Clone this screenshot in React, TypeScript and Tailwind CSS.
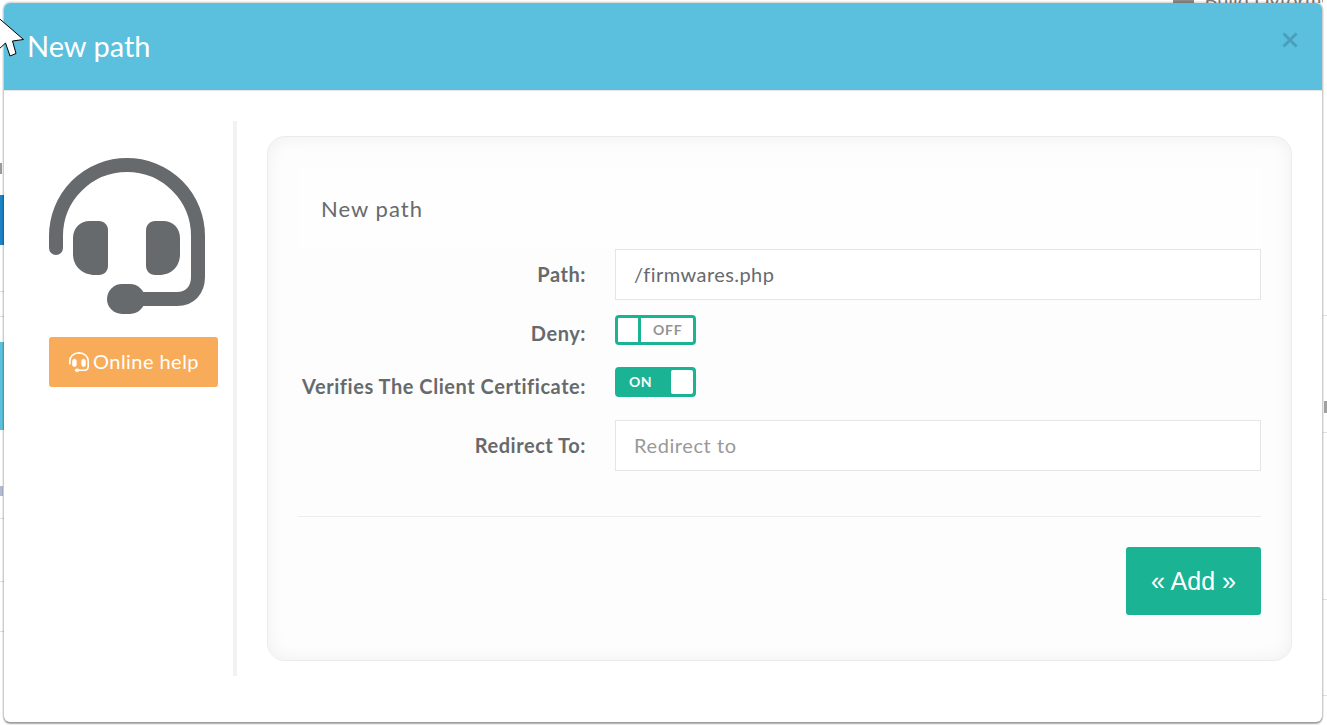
import React from 'react'

function Headset({ className }: { className?: string }) {
  return (
    <svg viewBox="0 0 156 156" className={className} fill="none">
      <path d="M7 90V78A71 71 0 0 1 149 78V119C149 132 141 141 128 141H90" stroke="currentColor" strokeWidth="14" strokeLinecap="round" />
      <path d="M41 63H50C55 63 59 67 59 72V108C59 113 55 117 50 117H46C33 117 24 108 24 96V80C24 70 31 63 41 63Z" fill="currentColor" />
      <path d="M114 63H106C101 63 97 67 97 72V108C97 113 101 117 106 117H110C123 117 131 108 131 96V80C131 70 124 63 114 63Z" fill="currentColor" />
      <rect x="58" y="126" width="38" height="30" rx="15" fill="currentColor" />
    </svg>
  )
}

function Toggle({ on }: { on: boolean }) {
  if (on) {
    return (
      <div className="flex h-[30px] w-[81px] items-center rounded-[4px] border-[3px] border-[#1ab394] bg-[#1ab394]">
        <span className="flex-1 pl-[11px] text-[14px] font-bold leading-none tracking-[0.4px] text-white">ON</span>
        <span className="h-full w-[22px] rounded-[2px] bg-white" />
      </div>
    )
  }
  return (
    <div className="flex h-[30px] w-[81px] items-center rounded-[4px] border-[3px] border-[#1ab394] bg-white">
      <span className="h-full w-[23px] border-r-[3px] border-[#1ab394]" />
      <span className="flex-1 pl-[12px] text-[14px] font-bold leading-none tracking-[0.8px] text-[#939393]">OFF</span>
    </div>
  )
}

function Row({ label, labelClass, className, children }: { label: string; labelClass?: string; className?: string; children: React.ReactNode }) {
  return (
    <div className={`flex items-center ${className ?? ''}`}>
      <label className={`w-[288px] whitespace-nowrap text-right text-[20px] font-bold tracking-[0.55px] text-[#676a6c] ${labelClass ?? ''}`}>{label}</label>
      <div className="ml-[29px] flex-1">{children}</div>
    </div>
  )
}

export default function App() {
  return (
    <div className="relative flex h-[725px] w-[1327px] justify-between overflow-hidden bg-white font-['Lato',sans-serif] text-[#676a6c]">
      {/* slivers of the page behind the modal */}
      <div className="flex w-[4px] flex-col">
        <div className="mt-[163px] h-[11px] w-[2px] bg-[#9a9a9a]" />
        <div className="mt-[21px] h-[50px] bg-[#1c84c6]" />
        <div className="mt-[46px] h-px bg-[#e0e0e0]" />
        <div className="mt-[24px] h-px bg-[#e0e0e0]" />
        <div className="mt-[25px] h-[88px] bg-[#5bc0de]" />
        <div className="mt-[56px] h-[10px] w-[3px] bg-[#b4b9d0]" />
        <div className="mt-[22px] h-px bg-[#e0e0e0]" />
        <div className="mt-[62px] h-px bg-[#e0e0e0]" />
        <div className="mt-[49px] h-px bg-[#e0e0e0]" />
      </div>
      <div className="flex h-[3px] flex-1 justify-end gap-[10px] overflow-hidden">
        <div className="h-full w-[21px] shrink-0 bg-[#8a8a8a]" />
        <span className="-mr-[7px] -mt-[15px] whitespace-nowrap text-[20px] text-[#7a7a7a]">Build Dyforms</span>
      </div>
      <div className="flex w-[4px] flex-col">
        <div className="mt-[315px] h-px bg-[#e0e0e0]" />
        <div className="mt-[85px] h-[12px] w-[3px] self-end bg-[#a0a0a0]" />
        <div className="mt-[19px] h-px bg-[#e0e0e0]" />
        <div className="mt-[166px] h-px bg-[#e0e0e0]" />
        <div className="mt-[95px] h-px bg-[#e0e0e0]" />
      </div>

      <div className="absolute left-[4px] top-[3px] flex h-[719px] w-[1318px] flex-col rounded-[6px] bg-white shadow-[0_0_0_1.5px_rgba(0,0,0,0.13),0_2px_2px_rgba(0,0,0,0.3)]">
        <div className="flex h-[88px] items-center justify-between rounded-t-[6px] border-b border-[#e5e5e5] bg-[#5bc0de] px-[24px]">
          <h4 className="-ml-px mb-[3px] text-[29px] font-normal leading-none text-white">New path</h4>
          <svg viewBox="0 0 16 16" className="mb-[13px] h-[16px] w-[16px] text-[#4aa0bb]" fill="none">
            <path d="M1.5 1.5L14.5 14.5M14.5 1.5L1.5 14.5" stroke="currentColor" strokeWidth="3" />
          </svg>
        </div>

        <div className="flex flex-1 pl-[45px] pt-[30px]">
          <div className="h-[555px] w-[188px] border-r-[4px] border-[#f2f2f2] pt-[37px]">
            <Headset className="h-[156px] w-[156px] text-[#676a6c]" />
            <button className="mt-[23px] flex h-[50px] w-[169px] items-center justify-center rounded-[3px] bg-[#f8ac59] pb-[2px] text-[20px] tracking-[0.45px] text-white">
              <svg viewBox="0 0 24 24" className="mr-[3px] mt-[2px] h-[22px] w-[22px]" fill="none" stroke="currentColor">
                <path d="M2 14V11C2 6 6 2 12 2C18 2 22 6 22 11V17C22 19.5 20.5 21 18 21H11" strokeWidth="1.8" strokeLinecap="round" />
                <rect x="5" y="9" width="4" height="8" rx="2" fill="currentColor" strokeWidth="0.8" />
                <rect x="15" y="9" width="4" height="8" rx="2" fill="currentColor" strokeWidth="0.8" />
                <rect x="8" y="19.5" width="4" height="3" rx="1.5" fill="currentColor" strokeWidth="0.8" />
              </svg>
              Online help
            </button>
          </div>

          <div className="ml-[30px] mt-[15px] h-[525px] w-[1025px] rounded-[18px] border border-[#ececec] bg-[#fdfdfd] px-[30px] pt-[31px] shadow-[inset_0_0_18px_rgba(0,0,0,0.06)]">
            <div className="flex h-[80px] items-center bg-[#fefefe] pl-[23px] text-[22px] tracking-[1.05px] text-[#676a6c]">New path</div>
            <Row label="Path:" labelClass="pb-[1px]" className="mt-px">
              <div className="flex h-[51px] items-center border border-[#e5e6e7] bg-white pb-[2px] pl-[18px] text-[20px] tracking-[0.43px] text-[#676a6c]">/firmwares.php</div>
            </Row>
            <Row label="Deny:" labelClass="pt-[6px]" className="mt-[15px] h-[30px]">
              <Toggle on={false} />
            </Row>
            <Row label="Verifies The Client Certificate:" labelClass="pt-[8px]" className="mt-[22px] h-[30px]">
              <Toggle on />
            </Row>
            <Row label="Redirect To:" labelClass="pb-[2px]" className="mt-[23px]">
              <div className="flex h-[51px] items-center border border-[#e5e6e7] bg-white pb-[2px] pl-[18px] text-[20px] tracking-[0.6px] text-[#999999]">Redirect to</div>
            </Row>
            <div className="mt-[45px] border-t border-[#ececec]" />
            <div className="mt-[30px] flex justify-end">
              <button className="h-[68px] w-[135px] rounded-[3px] bg-[#1ab394] pt-[2px] font-['Liberation_Sans',sans-serif] text-[25px] text-white">« Add »</button>
            </div>
          </div>
        </div>
      </div>

      {/* mouse pointer */}
      <svg viewBox="0 0 26 54" className="absolute left-0 top-[14px] h-[54px] w-[26px]">
        <path d="M-6 0L23.5 25.5L12.5 27L16 39.5L10 42L5.5 29L-2 36Z" fill="white" stroke="black" strokeWidth="1" />
      </svg>
    </div>
  )
}
